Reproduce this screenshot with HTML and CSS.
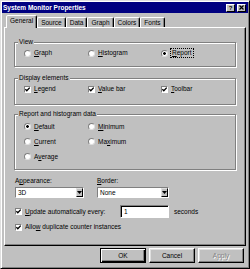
FILE: index.html
```html
<!DOCTYPE html>
<html lang="en">
<head>
    <meta charset="UTF-8">
    <meta name="viewport" content="width=device-width, initial-scale=1.0">
    <title>System Monitor Properties</title>
    <link rel="stylesheet" href="styles.css">
</head>
<body>

<div class="window">
    <div class="titlebar">
        <span class="title">System Monitor Properties</span>
        <div class="title-buttons">
            <span class="tbtn">?</span>
            <span class="tbtn">
                <svg width="5" height="5" viewBox="0 0 5 5"><path d="M0.5 0.5 L4.5 4.5 M4.5 0.5 L0.5 4.5" stroke="#000" stroke-width="1.2"/></svg>
            </span>
        </div>
    </div>

    <div class="tabs">
        <span class="tab active">General</span>
        <span class="tab">Source</span>
        <span class="tab">Data</span>
        <span class="tab">Graph</span>
        <span class="tab">Colors</span>
        <span class="tab">Fonts</span>
    </div>

    <div class="panel">
        <div class="group group-view">
            <span class="group-title">View</span>
            <div class="opts opts-3">
                <span class="opt"><span class="radio"></span><span><u>G</u>raph</span></span>
                <span class="opt"><span class="radio"></span><span><u>H</u>istogram</span></span>
                <span class="opt"><span class="radio on"></span><span class="focus"><u>R</u>eport</span></span>
            </div>
        </div>

        <div class="group group-display">
            <span class="group-title">Display elements</span>
            <div class="opts opts-3">
                <span class="opt"><span class="check"><svg width="5" height="5" viewBox="0 0 5 5"><path d="M0.3 2.2 L1.8 3.8 L4.7 0.6" fill="none" stroke="#000" stroke-width="1.3"/></svg></span><span><u>L</u>egend</span></span>
                <span class="opt"><span class="check"><svg width="5" height="5" viewBox="0 0 5 5"><path d="M0.3 2.2 L1.8 3.8 L4.7 0.6" fill="none" stroke="#000" stroke-width="1.3"/></svg></span><span><u>V</u>alue bar</span></span>
                <span class="opt"><span class="check"><svg width="5" height="5" viewBox="0 0 5 5"><path d="M0.3 2.2 L1.8 3.8 L4.7 0.6" fill="none" stroke="#000" stroke-width="1.3"/></svg></span><span><u>T</u>oolbar</span></span>
            </div>
        </div>

        <div class="group group-report">
            <span class="group-title">Report and histogram data</span>
            <div class="opts opts-2">
                <span class="opt"><span class="radio on"></span><span><u>D</u>efault</span></span>
                <span class="opt"><span class="radio"></span><span><u>M</u>inimum</span></span>
                <span class="opt"><span class="radio"></span><span><u>C</u>urrent</span></span>
                <span class="opt"><span class="radio"></span><span>Ma<u>x</u>imum</span></span>
                <span class="opt"><span class="radio"></span><span>A<u>v</u>erage</span></span>
            </div>
        </div>

        <div class="fields">
            <div class="field field-appearance">
                <span class="field-label">A<u>p</u>pearance:</span>
                <div class="select">
                    <span class="select-value">3D</span>
                    <span class="select-arrow"><svg width="5" height="3" viewBox="0 0 5 3"><path d="M0 0 H5 L2.5 3 Z" fill="#000"/></svg></span>
                </div>
            </div>
            <div class="field field-border">
                <span class="field-label"><u>B</u>order:</span>
                <div class="select">
                    <span class="select-value">None</span>
                    <span class="select-arrow"><svg width="5" height="3" viewBox="0 0 5 3"><path d="M0 0 H5 L2.5 3 Z" fill="#000"/></svg></span>
                </div>
            </div>
        </div>

        <div class="update-row">
            <span class="opt update-label"><span class="check"><svg width="5" height="5" viewBox="0 0 5 5"><path d="M0.3 2.2 L1.8 3.8 L4.7 0.6" fill="none" stroke="#000" stroke-width="1.3"/></svg></span><span><u>U</u>pdate automatically every:</span></span>
            <span class="textbox">1</span>
            <span class="seconds">seconds</span>
        </div>

        <div class="allow-row">
            <span class="opt"><span class="check"><svg width="5" height="5" viewBox="0 0 5 5"><path d="M0.3 2.2 L1.8 3.8 L4.7 0.6" fill="none" stroke="#000" stroke-width="1.3"/></svg></span><span>Allo<u>w</u> duplicate counter instances</span></span>
        </div>
    </div>

    <div class="buttons">
        <button class="btn default">OK</button>
        <button class="btn">Cancel</button>
        <button class="btn" disabled>Apply</button>
    </div>
</div>

</body>
</html>
```

FILE: styles.css
```css
body {
    margin: 0;
    background-color: #c0c0c0;
    font-family: "Liberation Sans", Arial, sans-serif;
    font-size: 6.5px;
    color: #000;
}
.window {
    width: 250px;
    height: 269px;
    box-sizing: border-box;
    border: 1px solid;
    border-color: #dfdfdf #000 #000 #dfdfdf;
    box-shadow: inset 1px 1px #fff, inset -1px -1px #808080;
    padding: 1px;
}
.titlebar {
    height: 11px;
    background-color: #000080;
    color: #fff;
    display: flex;
    align-items: center;
    justify-content: space-between;
    padding: 0 2px 0 1px;
}
.title {
    font-weight: bold;
    line-height: 11px;
}
.title-buttons {
    display: flex;
    gap: 2px;
}
.tbtn {
    width: 9px;
    height: 8px;
    box-sizing: border-box;
    background-color: #c0c0c0;
    border: 1px solid;
    border-color: #fff #000 #000 #fff;
    color: #000;
    font-weight: bold;
    font-size: 6px;
    line-height: 6px;
    display: flex;
    align-items: center;
    justify-content: center;
}
.tabs {
    height: 14px;
    display: flex;
    align-items: flex-end;
    padding-left: 4px;
}
.tab {
    height: 10px;
    box-sizing: border-box;
    padding: 0 3px;
    line-height: 9px;
    border: 1px solid;
    border-bottom: none;
    border-color: #fff #000 transparent #fff;
    box-shadow: inset -1px 0 #808080;
    border-radius: 2px 2px 0 0;
}
.tab.active {
    position: relative;
    z-index: 1;
    height: 13px;
    margin-bottom: -1px;
    line-height: 10px;
    background-color: #c0c0c0;
}
.panel {
    margin: 0 2px;
    height: 219px;
    box-sizing: border-box;
    border: 1px solid;
    border-color: #fff #000 #000 #fff;
    box-shadow: inset -1px -1px #808080;
    padding: 14px 9px 0 9px;
}
.group {
    position: relative;
    box-sizing: border-box;
    border: 1px solid #808080;
    box-shadow: 1px 1px #fff, inset 1px 1px #fff;
    padding-left: 9px;
}
.group-title {
    position: absolute;
    top: -5px;
    left: 3px;
    padding: 0 1px;
    line-height: 8px;
    background-color: #c0c0c0;
}
.group-view {
    height: 25px;
    padding-top: 6px;
}
.group-display {
    height: 27px;
    margin-top: 11px;
    padding-top: 6px;
}
.group-report {
    height: 56px;
    margin-top: 9px;
    padding-top: 4px;
}
.opts {
    display: grid;
}
.opts-3 {
    grid-template-columns: 64px 73px auto;
    grid-auto-rows: 8px;
}
.opts-2 {
    grid-template-columns: 64px auto;
    grid-auto-rows: 15px;
}
.opt {
    display: flex;
    align-items: center;
    gap: 3px;
    line-height: 8px;
    white-space: nowrap;
}
.radio {
    width: 7px;
    height: 7px;
    flex: none;
    box-sizing: border-box;
    border-radius: 50%;
    border: 1px solid;
    border-color: #808080 #dfdfdf #dfdfdf #808080;
    background: #fff;
}
.radio.on {
    background: radial-gradient(circle, #000 1.1px, #fff 1.6px);
}
.check {
    width: 7px;
    height: 7px;
    flex: none;
    box-sizing: border-box;
    border: 1px solid;
    border-color: #808080 #fff #fff #808080;
    background: #fff;
    display: flex;
    align-items: center;
    justify-content: center;
}
.focus {
    outline: 1px dotted #000;
    padding: 0 1px;
}
.fields {
    display: flex;
    gap: 13px;
    margin-top: 7px;
    padding-left: 1px;
}
.field {
    display: flex;
    flex-direction: column;
    gap: 2px;
}
.field-appearance {
    width: 69px;
}
.field-border {
    width: 72px;
}
.field-label {
    line-height: 8px;
}
.select {
    height: 11px;
    box-sizing: border-box;
    display: flex;
    background-color: #fff;
    border: 1px solid;
    border-color: #808080 #fff #fff #808080;
}
.select-value {
    flex: 1;
    line-height: 9px;
    padding-left: 2px;
}
.select-arrow {
    width: 7px;
    box-sizing: border-box;
    background-color: #c0c0c0;
    border: 1px solid;
    border-color: #dfdfdf #000 #000 #dfdfdf;
    display: flex;
    align-items: center;
    justify-content: center;
}
.update-row {
    display: flex;
    align-items: center;
    height: 13px;
    margin-top: 7px;
    padding-left: 1px;
}
.update-label {
    width: 105px;
}
.textbox {
    width: 49px;
    height: 13px;
    box-sizing: border-box;
    background-color: #fff;
    border: 1px solid;
    border-color: #808080 #fff #fff #808080;
    box-shadow: inset 1px 1px #000;
    line-height: 11px;
    padding-left: 3px;
}
.seconds {
    margin-left: 5px;
}
.allow-row {
    margin-top: 5px;
    padding-left: 1px;
}
.buttons {
    display: flex;
    justify-content: flex-end;
    gap: 3px;
    margin-top: 2px;
    padding-right: 4px;
}
.btn {
    width: 46px;
    height: 15px;
    padding: 0;
    box-sizing: border-box;
    background-color: #c0c0c0;
    font-family: inherit;
    font-size: 6.5px;
    color: #000;
    border: 1px solid;
    border-color: #fff #000 #000 #fff;
    box-shadow: inset -1px -1px #808080, inset 1px 1px #dfdfdf;
}
.btn.default {
    border-color: #000;
    box-shadow: inset 1px 1px #fff, inset -1px -1px #000, inset -2px -2px #808080;
}
.btn:disabled {
    color: #808080;
    text-shadow: 1px 1px #fff;
}
```
